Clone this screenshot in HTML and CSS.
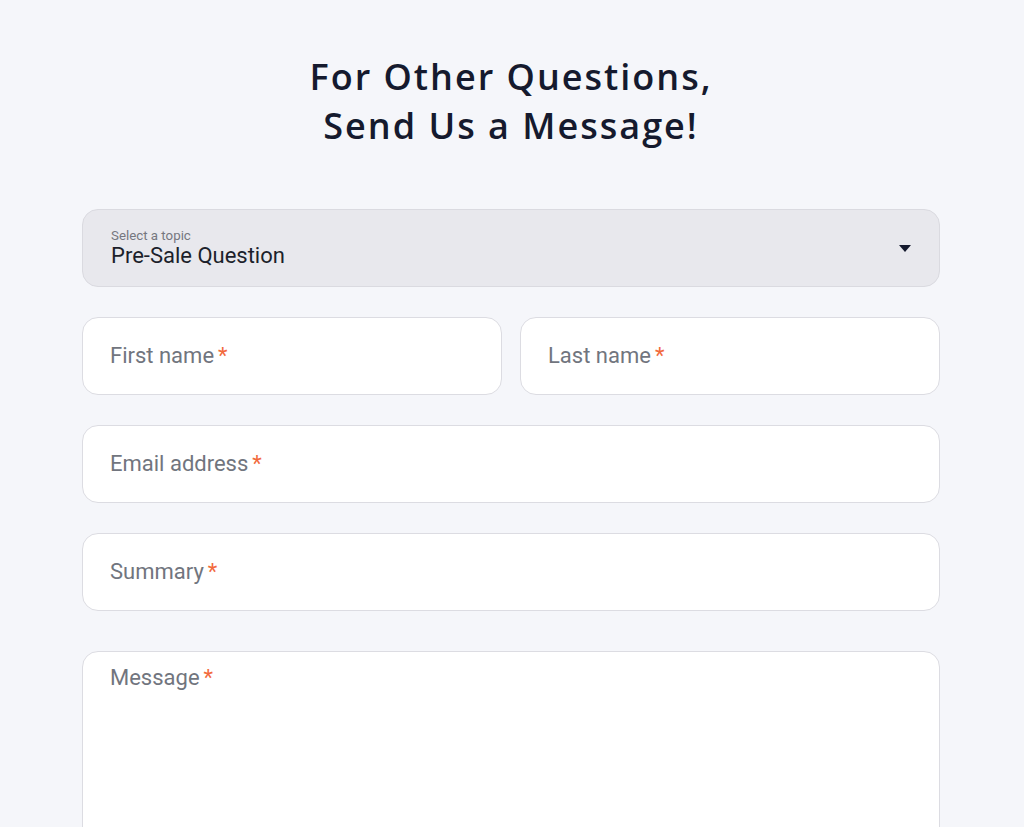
FILE: index.html
```html
<!DOCTYPE html>
<html lang="en">
<head>
<meta charset="utf-8">
<title>Contact</title>
<link rel="stylesheet" href="styles.css">
</head>
<body>
<main class="page">
  <h1 class="title">For Other Questions,<br>Send Us a Message!</h1>
  <form class="form">
    <div class="select">
      <div class="select-text">
        <span class="select-label">Select a topic</span>
        <span class="select-value">Pre-Sale Question</span>
      </div>
      <svg class="caret" width="12" height="7" viewBox="0 0 12 7"><path d="M0 0h12L6 7z" fill="#151a2e"/></svg>
    </div>
    <div class="row">
      <div class="field"><span class="label">First name<span class="req">*</span></span></div>
      <div class="field"><span class="label">Last name<span class="req">*</span></span></div>
    </div>
    <div class="field"><span class="label">Email address<span class="req">*</span></span></div>
    <div class="field"><span class="label">Summary<span class="req">*</span></span></div>
    <div class="field area"><span class="label">Message<span class="req">*</span></span></div>
  </form>
</main>
</body>
</html>
```
FILE: styles.css
```css
html, body {
  margin: 0;
  padding: 0;
  background: #f5f6fa;
}
body {
  font-family: Roboto, "Liberation Sans", sans-serif;
}
.page {
  width: 858px;
  margin: 0 0 0 82px;
  padding-top: 52px;
}
.title {
  margin: 0 0 59px;
  text-align: center;
  font-family: "Open Sans", "Liberation Sans", sans-serif;
  font-weight: 600;
  font-size: 36px;
  line-height: 49px;
  color: #151a2e;
  letter-spacing: 2px;
}
.form {
  display: flex;
  flex-direction: column;
  gap: 30px;
}
.select {
  height: 78px;
  box-sizing: border-box;
  border: 1px solid #dadae0;
  border-radius: 16px;
  background: #e8e8ed;
  display: flex;
  align-items: center;
  justify-content: space-between;
  padding: 0 28px 0 28px;
}
.select-text {
  display: flex;
  flex-direction: column;
  padding-top: 1px;
}
.select-label {
  font-size: 13.3px;
  line-height: 15px;
  color: #75777f;
}
.select-value {
  font-size: 22px;
  line-height: 26px;
  color: #1c1f2b;
  margin-top: 0;
}
.row {
  display: grid;
  grid-template-columns: 1fr 1fr;
  gap: 18px;
}
.field {
  height: 78px;
  box-sizing: border-box;
  background: #fff;
  border: 1px solid #dcdce2;
  border-radius: 16px;
  display: flex;
  align-items: center;
  padding: 0 27px;
}
.field.area {
  height: 240px;
  align-items: flex-start;
  padding-top: 13px;
  margin-top: 10px;
}
.label {
  font-size: 22px;
  line-height: 26px;
  color: #71757e;
}
.req {
  color: #f26a3d;
  margin-left: 4px;
}
```
